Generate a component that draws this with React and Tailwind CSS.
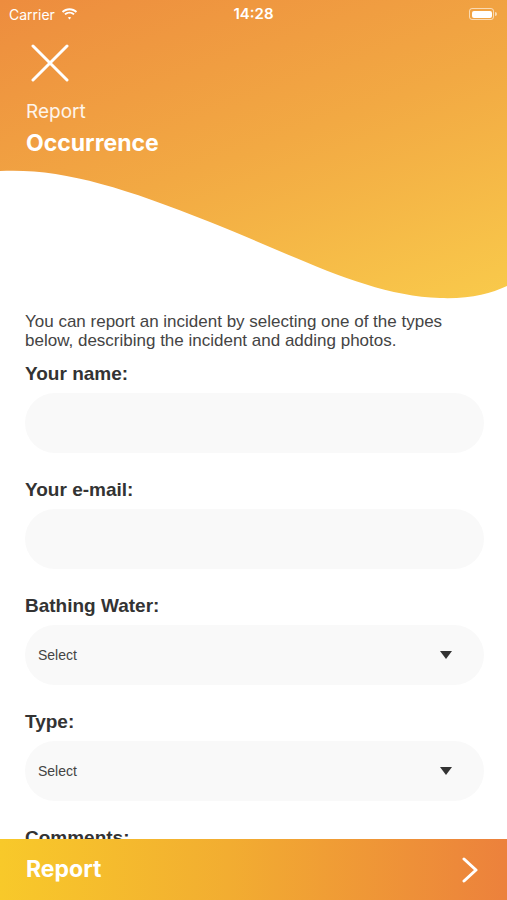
import React from 'react';

// Status bar at the top of the phone
const StatusBar = () => (
    <div className="flex items-center justify-between h-[28px] px-[9px] text-white font-['Inter',sans-serif]">
        <div className="flex items-center gap-[6px] w-[120px]">
            <span className="text-[14px]">Carrier</span>
            <svg width="17" height="12" viewBox="0 0 17 12" fill="white">
                <path d="M8.5 2.2c2.4 0 4.6.9 6.3 2.5l1.3-1.4C14.1 1.4 11.4.3 8.5.3S2.9 1.4.9 3.3l1.3 1.4C3.9 3.1 6.1 2.2 8.5 2.2z" />
                <path d="M8.5 5.6c1.5 0 2.9.6 3.9 1.5l1.3-1.4C12.3 4.4 10.5 3.7 8.5 3.7S4.7 4.4 3.3 5.7l1.3 1.4c1-.9 2.4-1.5 3.9-1.5z" />
                <path d="M8.5 8.9c.7 0 1.3.3 1.7.7l-1.7 2-1.7-2c.4-.4 1-.7 1.7-.7z" />
            </svg>
        </div>
        <span className="text-[15px] font-semibold">14:28</span>
        <div className="flex justify-end items-center w-[120px] pr-[1px]">
            <div className="w-[25px] h-[12px] rounded-[3px] border border-white/60 p-[1.5px]">
                <div className="w-full h-full rounded-[2px] bg-white" />
            </div>
            <div className="w-[1.5px] h-[4px] bg-white/60 rounded-r ml-[1px]" />
        </div>
    </div>
);

// Labeled rounded text field
const InputField = ({ label }) => (
    <div className="flex flex-col">
        <p className="text-[19px] leading-[22px] font-bold text-[#333]">{label}</p>
        <div className="mt-[8px] h-[60px] rounded-full bg-[#f9f9f9]" />
    </div>
);

// Labeled dropdown
const SelectField = ({ label }) => (
    <div className="flex flex-col">
        <p className="text-[19px] leading-[22px] font-bold text-[#333]">{label}</p>
        <div className="mt-[8px] h-[60px] rounded-full bg-[#f9f9f9] flex items-center justify-between pl-[13px] pr-[32px]">
            <span className="text-[14px] text-[#444]">Select</span>
            <svg width="12" height="8" viewBox="0 0 12 8">
                <path d="M0 0h12L6 8z" fill="#333" />
            </svg>
        </div>
    </div>
);

export default function App() {
    return (
        <div className="h-screen flex flex-col bg-white font-['Liberation_Sans',Arial,sans-serif] overflow-hidden">
            <div className="flex-1 overflow-hidden">
                {/* Header */}
                <div className="relative h-[300px] bg-[linear-gradient(160deg,#ed8c3e_0%,#f2a943_50%,#f9ca4b_100%)]">
                    <svg className="absolute inset-0" width="507" height="300" viewBox="0 0 507 300">
                        <path d="M0 171 C60 168 120 186 210 222 C300 258 370 296 440 298 C470 299 490 294 507 286 L507 301 L0 301 Z" fill="white" />
                    </svg>
                    <div className="relative">
                        <StatusBar />
                        <div className="px-[26px] pt-[16px] font-['Inter',sans-serif] text-white">
                            <svg width="38" height="38" viewBox="0 0 38 38" className="ml-[5px]">
                                <path d="M2 2L36 36M36 2L2 36" stroke="white" strokeWidth="3" strokeLinecap="round" />
                            </svg>
                            <p className="mt-[18px] text-[19px] leading-[24px] text-white/90">Report</p>
                            <p className="mt-[5px] text-[23px] leading-[28px] font-bold">Occurrence</p>
                        </div>
                    </div>
                </div>

                {/* Form */}
                <div className="pl-[25px] pr-[23px] pt-[12px] flex flex-col">
                    <p className="text-[17px] leading-[19px] text-[#444]">
                        You can report an incident by selecting one of the types below, describing the incident and adding photos.
                    </p>
                    <div className="mt-[13px] flex flex-col gap-[26px]">
                        <InputField label="Your name:" />
                        <InputField label="Your e-mail:" />
                        <SelectField label="Bathing Water:" />
                        <SelectField label="Type:" />
                        <p className="text-[19px] leading-[22px] font-bold text-[#333]">Comments:</p>
                    </div>
                </div>
            </div>

            {/* Bottom action bar */}
            <div className="h-[61px] shrink-0 flex items-center justify-between pl-[26px] pr-[29px] bg-[linear-gradient(90deg,#f8c92a_0%,#f2ad31_45%,#ec813c_100%)]">
                <span className="text-[23px] font-bold text-white font-['Inter',sans-serif]">Report</span>
                <svg width="16" height="26" viewBox="0 0 16 26">
                    <path d="M2 2L14 13L2 24" stroke="white" strokeWidth="3" fill="none" strokeLinecap="round" strokeLinejoin="round" />
                </svg>
            </div>
        </div>
    );
}
